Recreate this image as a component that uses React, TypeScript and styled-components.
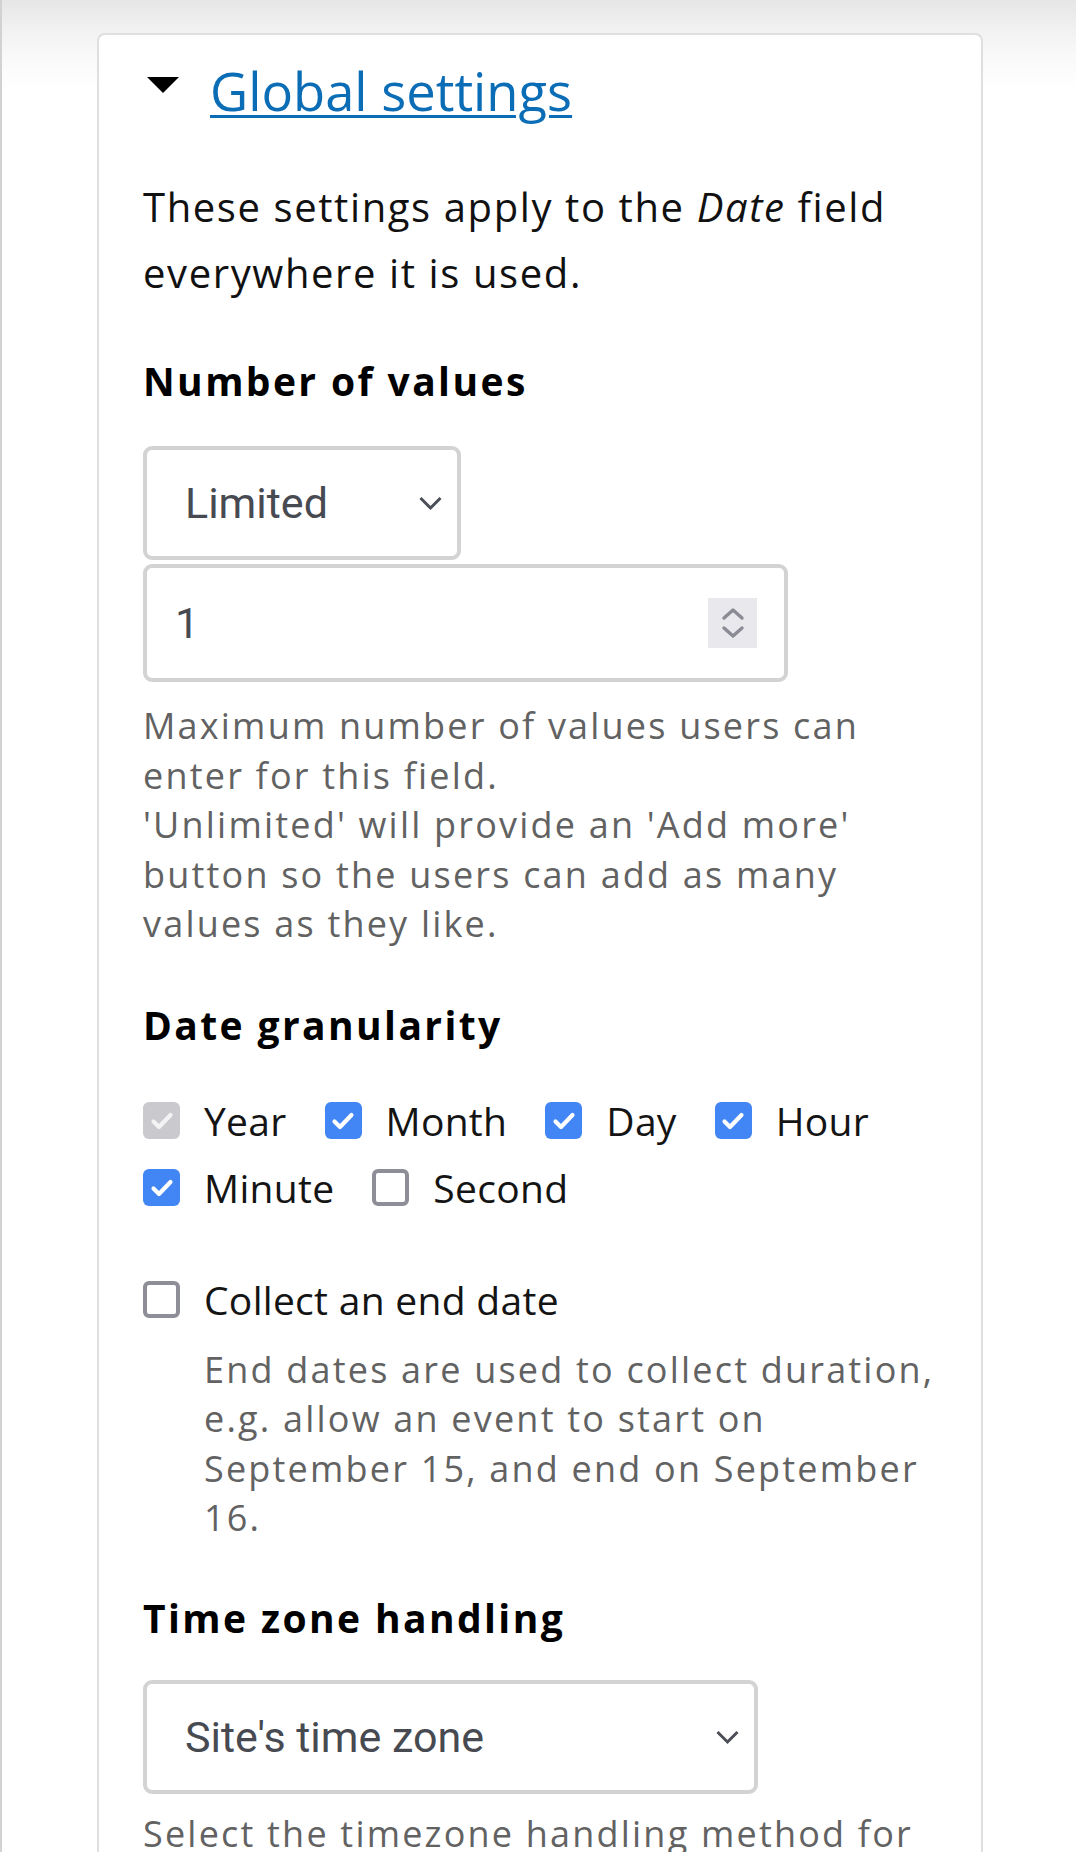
import React from "react";
import styled, { createGlobalStyle, css } from "styled-components";

const GlobalStyle = createGlobalStyle`
  html, body {
    margin: 0;
    padding: 0;
    background: #ffffff;
  }
  body {
    font-family: "Open Sans", "Liberation Sans", sans-serif;
    color: #1b1b1b;
  }
`;

const Page = styled.div`
  min-height: 1852px;
  border-left: 2px solid #d2d2d2;
  background: linear-gradient(to bottom, #e6e6e6 0px, #f2f2f2 32px, #fafafa 60px, #ffffff 90px);
  padding-top: 33px;
  box-sizing: border-box;
  overflow: hidden;
`;

const Card = styled.div`
  margin-left: 95px;
  width: 886px;
  box-sizing: border-box;
  background: #ffffff;
  border: 2px solid #dfdfdf;
  border-bottom: none;
  border-radius: 8px 8px 0 0;
  padding: 16px 34px 0 44px;
`;

const Summary = styled.div`
  display: flex;
  align-items: flex-start;
  gap: 31px;
  padding-left: 4px;
  height: 80px;
`;

const Caret = styled.span`
  width: 0;
  height: 0;
  margin-top: 26px;
  border-left: 16px solid transparent;
  border-right: 16px solid transparent;
  border-top: 16px solid #000000;
`;

const SummaryLink = styled.a`
  font-size: 52.5px;
  line-height: 80px;
  color: #0a6db5;
  text-decoration: underline;
  text-decoration-thickness: 3px;
  text-underline-offset: 4px;
  cursor: pointer;
`;

const Intro = styled.p`
  margin: 43px 0 0 0;
  font-size: 40px;
  line-height: 66px;
  letter-spacing: 1.6px;
  color: #111111;

  em {
    font-style: italic;
  }
`;

const SectionTitle = styled.h3<{ $gap: number }>`
  margin: ${(p) => p.$gap}px 0 0 0;
  font-size: 39px;
  line-height: 50px;
  font-weight: 700;
  letter-spacing: 2.4px;
  color: #000000;
`;

const fieldBox = css`
  display: flex;
  align-items: center;
  box-sizing: border-box;
  border: 4px solid #d3d3d3;
  border-radius: 9px;
  background: #ffffff;
  font-family: Roboto, "Liberation Sans", sans-serif;
  color: #474a51;
  font-size: 43px;
`;

const SelectBox = styled.div<{ $width: number; $gap: number }>`
  ${fieldBox};
  width: ${(p) => p.$width}px;
  height: 114px;
  margin-top: ${(p) => p.$gap}px;
  padding: 0 14px 0 38px;
  justify-content: space-between;
`;

const NumberBox = styled.div`
  ${fieldBox};
  width: 645px;
  height: 118px;
  margin-top: 4px;
  padding: 0 27px 0 28px;
  justify-content: space-between;
`;

const Spinner = styled.div`
  width: 49px;
  height: 50px;
  background: #e9e9ed;
  display: flex;
  align-items: center;
  justify-content: center;
`;

const Description = styled.div<{ $gap: number; $indent?: number }>`
  margin: ${(p) => p.$gap}px 0 0 ${(p) => p.$indent || 0}px;
  font-size: 36px;
  line-height: 49.5px;
  letter-spacing: 2.2px;
  color: #626262;
`;

const CheckGroup = styled.div<{ $gap: number }>`
  display: flex;
  flex-wrap: wrap;
  column-gap: 38px;
  row-gap: 17px;
  margin-top: ${(p) => p.$gap}px;
`;

const CheckItem = styled.label`
  display: flex;
  align-items: center;
  gap: 24px;
  height: 50px;
  font-size: 39px;
  line-height: 50px;
  letter-spacing: 0.3px;
  color: #141414;
`;

type CheckState = "on" | "off" | "disabled";

const Box = styled.span<{ $state: CheckState }>`
  width: 37px;
  height: 37px;
  box-sizing: border-box;
  border-radius: 6px;
  display: flex;
  align-items: center;
  justify-content: center;
  flex-shrink: 0;
  ${(p) =>
    p.$state === "on" &&
    css`
      background: #4285f4;
    `}
  ${(p) =>
    p.$state === "disabled" &&
    css`
      background: #c9c9ce;
    `}
  ${(p) =>
    p.$state === "off" &&
    css`
      border: 4px solid #8e8e98;
      background: #ffffff;
    `}
`;

const Check = ({ state, label }: { state: CheckState; label: string }) => (
  <CheckItem>
    <Box $state={state}>
      {state !== "off" && (
        <svg width="26" height="22" viewBox="0 0 26 22">
          <path
            d="M4.5 11.5 L10 17 L21.5 5"
            fill="none"
            stroke={state === "disabled" ? "#f3f3f3" : "#ffffff"}
            strokeWidth="4.2"
            strokeLinecap="round"
            strokeLinejoin="round"
          />
        </svg>
      )}
    </Box>
    {label}
  </CheckItem>
);

const Chevron = () => (
  <svg width="25" height="16" viewBox="0 0 25 16">
    <path d="M2.5 3 L12.5 13 L22.5 3" fill="none" stroke="#4a4e55" strokeWidth="3" />
  </svg>
);

const SpinArrows = () => (
  <svg width="24" height="38" viewBox="0 0 24 38">
    <path d="M3 14 L12 6 L21 14" fill="none" stroke="#8b8b96" strokeWidth="3.4" strokeLinecap="round" strokeLinejoin="round" />
    <path d="M3 24 L12 32 L21 24" fill="none" stroke="#8b8b96" strokeWidth="3.4" strokeLinecap="round" strokeLinejoin="round" />
  </svg>
);

export default function App() {
  return (
    <>
      <GlobalStyle />
      <Page>
        <Card>
          <Summary>
            <Caret />
            <SummaryLink>Global settings</SummaryLink>
          </Summary>

          <Intro>
            These settings apply to the <em>Date</em> field everywhere it is used.
          </Intro>

          <SectionTitle $gap={50}>Number of values</SectionTitle>
          <SelectBox $width={318} $gap={40}>
            <span>Limited</span>
            <Chevron />
          </SelectBox>
          <NumberBox>
            <span>1</span>
            <Spinner>
              <SpinArrows />
            </Spinner>
          </NumberBox>
          <Description $gap={19}>
            Maximum number of values users can enter for this field.
            <br />
            'Unlimited' will provide an 'Add more' button so the users can add as many values as they like.
          </Description>

          <SectionTitle $gap={51}>Date granularity</SectionTitle>
          <CheckGroup $gap={46}>
            <Check state="disabled" label="Year" />
            <Check state="on" label="Month" />
            <Check state="on" label="Day" />
            <Check state="on" label="Hour" />
            <Check state="on" label="Minute" />
            <Check state="off" label="Second" />
          </CheckGroup>

          <CheckGroup $gap={62}>
            <Check state="off" label="Collect an end date" />
          </CheckGroup>
          <Description $gap={20} $indent={61}>
            End dates are used to collect duration, e.g. allow an event to start on September 15, and end on September
            16.
          </Description>

          <SectionTitle $gap={50}>Time zone handling</SectionTitle>
          <SelectBox $width={615} $gap={37}>
            <span>Site's time zone</span>
            <Chevron />
          </SelectBox>
          <Description $gap={15}>Select the timezone handling method for this date field.</Description>
        </Card>
      </Page>
    </>
  );
}
